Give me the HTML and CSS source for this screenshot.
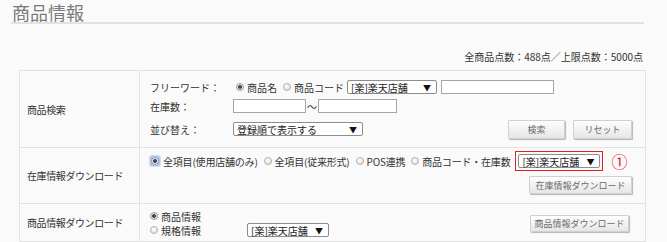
FILE: index.html
```html
<!DOCTYPE html>
<html lang="ja">
<head>
<meta charset="utf-8">
<title>商品情報</title>
<link rel="stylesheet" href="styles.css">
</head>
<body>
<div class="page">
  <h1 class="title">商品情報</h1>
  <p class="count">全商品点数：488点／上限点数：5000点</p>
  <table class="form">
    <colgroup><col class="col-h"><col></colgroup>
    <tr class="r1">
      <th>商品検索</th>
      <td>
        <div class="cell c1">
          <div class="line l1">
            <span class="lbl">フリーワード：</span>
            <label class="opt first"><input type="radio" name="kw" checked><span>商品名</span></label>
            <label class="opt"><input type="radio" name="kw"><span>商品コード</span></label>
            <div class="sel w-shop1">[楽]楽天店舗<span class="arr">▼</span></div>
            <div class="txt w-free"></div>
          </div>
          <div class="line l2">
            <span class="lbl">在庫数：</span>
            <div class="txt w-min"></div>
            <span class="tilde">～</span>
            <div class="txt w-max"></div>
          </div>
          <div class="line l3">
            <span class="lbl">並び替え：</span>
            <div class="sel w-sort">登録順で表示する<span class="arr">▼</span></div>
            <div class="btns">
              <button class="btn w-search">検索</button>
              <button class="btn w-reset">リセット</button>
            </div>
          </div>
        </div>
      </td>
    </tr>
    <tr class="r2">
      <th>在庫情報ダウンロード</th>
      <td>
        <div class="cell c2">
          <div class="line">
            <label class="opt"><span class="focus"><input type="radio" name="dl" checked></span><span>全項目(使用店舗のみ)</span></label>
            <label class="opt"><input type="radio" name="dl"><span>全項目(従来形式)</span></label>
            <label class="opt"><input type="radio" name="dl"><span>POS連携</span></label>
            <label class="opt last"><input type="radio" name="dl"><span>商品コード・在庫数</span></label>
            <div class="redbox"><div class="sel w-shop2">[楽]楽天店舗<span class="arr">▼</span></div></div>
            <span class="mark">①</span>
          </div>
          <div class="line end">
            <button class="btn w-stock">在庫情報ダウンロード</button>
          </div>
        </div>
      </td>
    </tr>
    <tr class="r3">
      <th>商品情報ダウンロード</th>
      <td>
        <div class="cell c3">
          <div class="stack">
            <label class="opt"><input type="radio" name="pi" checked><span class="wide">商品情報</span></label>
            <div class="line">
              <label class="opt"><input type="radio" name="pi"><span class="wide">規格情報</span></label>
              <div class="sel w-shop3">[楽]楽天店舗<span class="arr">▼</span></div>
            </div>
          </div>
          <button class="btn w-item">商品情報ダウンロード</button>
        </div>
      </td>
    </tr>
  </table>
</div>
</body>
</html>
```

FILE: styles.css
```css
* { box-sizing: border-box; }
html, body { margin: 0; }
body {
  background: #fafafa;
  font-family: "Noto Sans CJK JP", "Noto Sans", sans-serif;
  font-size: 10px;
  color: #333;
}
.page { padding: 0 21px 0 11px; }
.title {
  margin: 0 2px 0 0;
  padding: 2px 0 0 1px;
  font-size: 18px;
  line-height: 20px;
  font-weight: normal;
  color: #7a7a7a;
  border-bottom: 2px solid #e2e2e2;
}
.count {
  margin: 27px 3px 0 0;
  text-align: right;
  font-size: 10px;
  line-height: 12px;
}
.form {
  margin: 7px 0 0 8px;
  width: 627px;
  border-collapse: collapse;
  table-layout: fixed;
}
.col-h { width: 120px; }
.form th, .form td { border: 1px solid #e3e3e3; }
.form th {
  padding: 0 0 0 7px;
  text-align: left;
  font-weight: normal;
  vertical-align: middle;
  white-space: nowrap;
  letter-spacing: -0.4px;
}
.form td { padding: 0 13px 0 10px; }

.cell { display: flex; flex-direction: column; }
.c1 { padding: 9px 0 7px; gap: 5px; }
.c2 { padding: 3px 0 9px; gap: 5px; }
.c3 { flex-direction: row; align-items: center; justify-content: space-between; padding: 5px 3px 4px 0; }

.line { display: flex; align-items: center; }
.l1, .l2 { height: 14px; }
.l3 { height: 22px; }
.end { justify-content: flex-end; }
.lbl { width: 84px; white-space: nowrap; }

.opt {
  display: inline-flex;
  align-items: center;
  gap: 3px;
  margin-right: 6px;
  white-space: nowrap;
}
.c2 .opt { letter-spacing: -0.2px; }
.c2 .last { margin-right: 5px; }
.first { margin-left: 2px; }
.opt input {
  appearance: none;
  -webkit-appearance: none;
  margin: 0;
  width: 8px;
  height: 8px;
  border-radius: 50%;
  border: 1px solid #b0b0b0;
  background: radial-gradient(circle at 40% 35%, #fff 0, #e2e2e2 70%);
}
.opt input:checked {
  background: radial-gradient(circle, #4a4a4a 0 1.6px, #e8e8e8 2.2px);
  border-color: #999;
}
.focus {
  display: inline-flex;
  padding: 1px;
  border-radius: 2px;
  background: #a9c8f0;
  box-shadow: 0 0 0 1px #c9dcf5;
}

.sel {
  height: 14px;
  display: flex;
  align-items: center;
  justify-content: space-between;
  padding: 0 5px 0 3px;
  background: #fff;
  border: 1px solid #8d8d8d;
  border-radius: 2px;
  white-space: nowrap;
  color: #222;
  letter-spacing: 0;
}
.arr { font-size: 8px; color: #111; }
.w-shop1 { width: 90px; margin-left: -3px; }
.w-sort { width: 130px; margin-left: -1px; }
.w-shop2 { width: 82px; }
.w-shop3 { width: 82px; }

.txt {
  height: 14px;
  background: #fff;
  border: 1px solid #a5a5a5;
}
.w-free { width: 113px; margin-left: 4px; }
.w-min { width: 73px; margin-left: -1px; }
.w-max { width: 79px; }
.tilde { width: 12px; text-align: center; }

.redbox {
  padding: 2px;
  border: 1px solid #e02020;
}
.mark {
  margin-left: 8px;
  font-size: 16px;
  line-height: 20px;
  color: #e02020;
}

.btns { margin-left: auto; display: flex; gap: 8px; }
.btn {
  height: 19px;
  padding: 0;
  font-family: inherit;
  font-size: 9px;
  color: #6a6a6a;
  background: linear-gradient(#fefefe, #e6e6e6);
  border: 1px solid #d0d0d0;
  border-radius: 1px;
  box-shadow: 1px 1px 1px #b5b5b5;
}
.w-search { width: 57px; }
.w-reset { width: 59px; }
.w-stock { width: 103px; height: 18px; }
.w-item { width: 99px; height: 17px; }

.stack { display: flex; flex-direction: column; }
.stack .opt { margin-right: 0; }
.stack > .opt, .stack > .line { height: 14px; }
.wide { width: 86px; }
```
